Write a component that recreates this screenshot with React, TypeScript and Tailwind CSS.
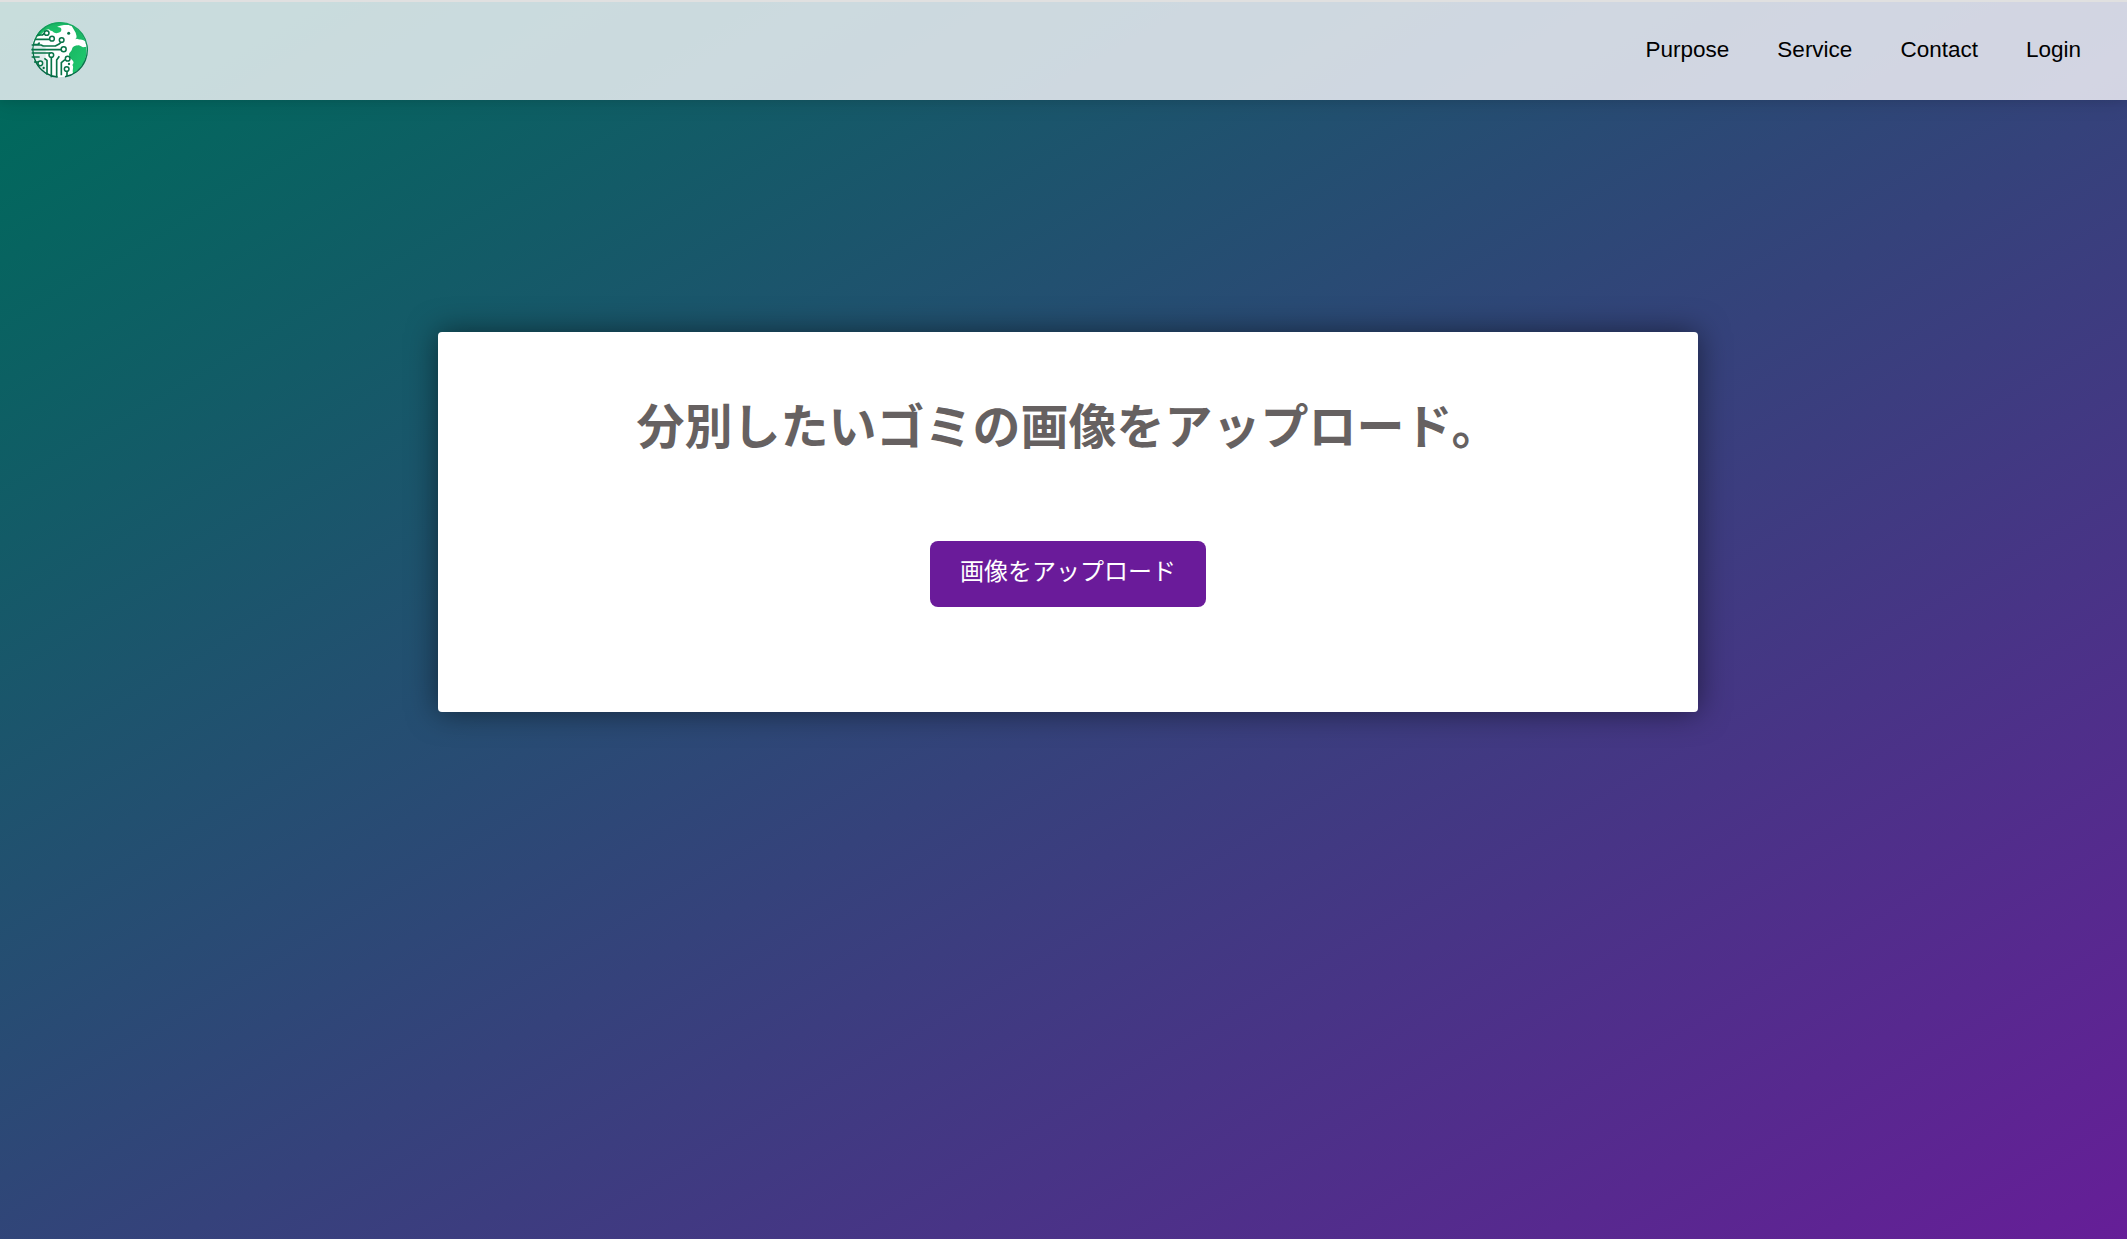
const navItems = ['Purpose', 'Service', 'Contact', 'Login'];

function Logo() {
  return (
    <svg viewBox="30 30 180 180" className="size-[60px]" fill="none" role="img" aria-label="Logo">
      <defs>
        <linearGradient id="land" x1="0" y1="0" x2="0.6" y2="1">
          <stop offset="0" stopColor="#17ad5e" />
          <stop offset="1" stopColor="#1fc96e" />
        </linearGradient>
        <linearGradient id="rim" x1="0.6" y1="0" x2="0.3" y2="1">
          <stop offset="0" stopColor="#18ad62" />
          <stop offset="0.5" stopColor="#087a4c" />
          <stop offset="1" stopColor="#046343" />
        </linearGradient>
        <clipPath id="globe">
          <circle cx="120" cy="120" r="83" />
        </clipPath>
      </defs>
      <circle cx="120" cy="120" r="82" fill="#fff" />
      <g clipPath="url(#globe)">
        <path d="M36 120 V95 L80 112 V200 H60 Z" fill="#c9dedc" opacity="0.55" />
        <path
          d="M50 80 C64 56 90 36 122 36 C142 36 158 42 162 48 C150 44 128 44 114 51 C128 50 130 60 124 66 C116 71 106 70 103 66 C98 61 93 64 90 58 C80 58 72 68 62 78 Z"
          fill="url(#land)"
        />
        <path
          d="M156 44 C188 58 203 86 203 122 C202 158 188 184 163 192 C158 180 166 172 160 165 C172 152 152 150 150 136 C149 126 157 128 160 114 C166 106 172 107 180 106 L192 112 L202 110 V98 C192 84 186 92 174 86 L168 88 C176 82 172 76 170 68 Z"
          fill="url(#land)"
        />
        <path d="M155 94 L164 100 Q176 88 184 99 T203 105" stroke="#fff" strokeWidth="6" />
      </g>
      <path d="M116 201 A81.5 81.5 0 1 1 138 200" stroke="url(#rim)" strokeWidth="4.5" />
      <g stroke="#087448" strokeWidth="5" strokeLinejoin="round">
        <path d="M54 75 H70 L76 70 M47 88 H92 M42 104 H56 L62 98 M38 105 H66 L73 108 H109 L119 103 L126 97 M37 119 H127 M38 129 H91 L96 132 M38 141 H62" />
        <path d="M97 142 V202 M45 156 H59 M76 145 L84 151 V194 M113 202 V150 L121 139 M127 196 V158 L138 149 M144 184 V198" />
        <g fill="#fff" strokeWidth="4.5">
          <circle cx="83" cy="69" r="7" />
          <circle cx="99" cy="86" r="7" />
          <circle cx="128" cy="90" r="7" />
          <circle cx="134" cy="118" r="7.5" />
          <circle cx="97" cy="135" r="7" />
          <circle cx="64" cy="160" r="7" />
          <circle cx="146" cy="146" r="7" />
          <circle cx="143" cy="177" r="7" />
        </g>
      </g>
      <g fill="#087448">
        <circle cx="149" cy="70" r="4.5" />
        <circle cx="74" cy="174" r="3.5" />
        <circle cx="150" cy="162" r="3.5" />
      </g>
    </svg>
  );
}

export default function App() {
  return (
    <div className="flex h-[1239px] w-full flex-col overflow-hidden bg-[linear-gradient(to_bottom_right,#00695c,#6a1b9a)] font-['Liberation_Sans','Noto_Sans_CJK_JP',sans-serif]">
      <header className="z-10 flex h-[100px] shrink-0 items-center justify-between border-t-2 border-[#e0e0e0] bg-[#fafafc]/80 pr-[22px] pb-0.5 pl-[29px] shadow-[0_6px_18px_rgba(0,0,0,0.07),0_3px_6px_rgba(0,0,0,0.05)]">
        <a href="#" className="block">
          <Logo />
        </a>
        <nav className="flex text-[22.5px] leading-none text-black">
          {navItems.map((item) => (
            <a key={item} href="#" className="px-6">
              {item}
            </a>
          ))}
        </nav>
      </header>
      <div className="h-[1239px] shrink-0 bg-[linear-gradient(to_bottom_right,#00695c,#6a1b9a)] pt-[232px] pl-[438px]">
        <main className="flex h-[380px] w-[1260px] flex-col items-center rounded bg-white shadow-[0_0_30px_rgba(0,0,0,0.5)]">
          <h1 className="mt-[58px] text-[48px] leading-[76px] font-bold text-[#666161]">
            分別したいゴミの画像をアップロード。
          </h1>
          <button className="mt-[75px] h-[66px] w-[276px] rounded-[8px] bg-[#6a1b9a] pb-1 text-[24px] leading-none text-white">
            画像をアップロード
          </button>
        </main>
      </div>
    </div>
  );
}
